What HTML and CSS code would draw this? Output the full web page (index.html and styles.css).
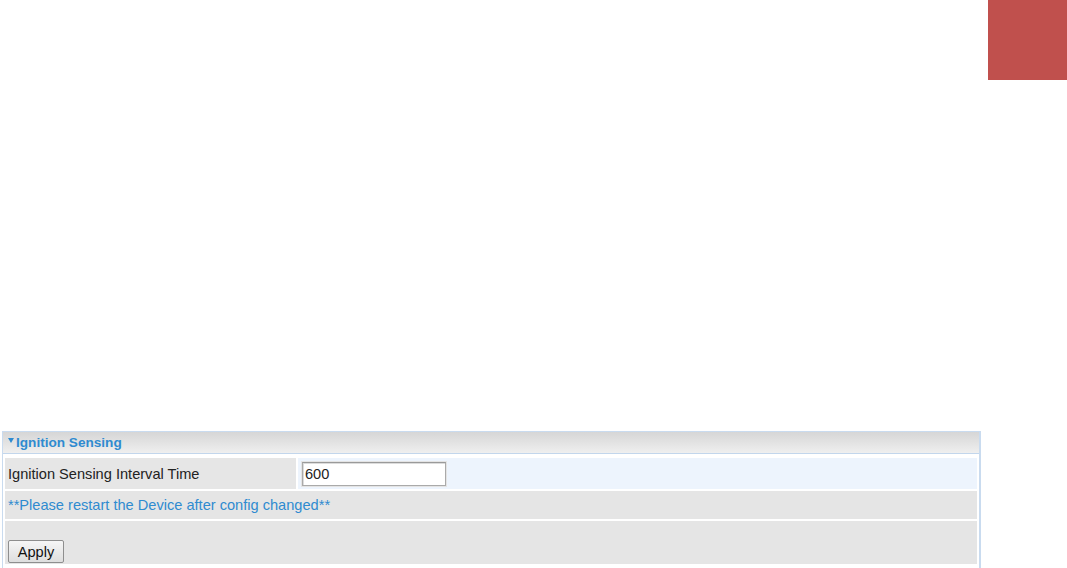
FILE: index.html
```html
<!DOCTYPE html>
<html>
<head>
<meta charset="utf-8">
<link rel="stylesheet" href="styles.css">
</head>
<body>
<div class="topbar"><div class="badge"></div></div>
<div class="panel">
  <div class="panel-head"><span class="caret"></span>Ignition Sensing</div>
  <table class="form">
    <tr class="row-input">
      <td class="label">Ignition Sensing Interval Time</td>
      <td class="value"><input class="field" type="text" value="600"></td>
    </tr>
    <tr class="row-note">
      <td class="note" colspan="2">**Please restart the Device after config changed**</td>
    </tr>
    <tr class="row-actions">
      <td class="actions" colspan="2"><button class="btn">Apply</button></td>
    </tr>
  </table>
</div>
</body>
</html>
```

FILE: styles.css
```css
html, body {
  margin: 0;
  padding: 0;
  background: #ffffff;
  font-family: "Liberation Sans", Arial, sans-serif;
  overflow: hidden;
}
.topbar {
  display: flex;
  justify-content: flex-end;
  height: 431px;
}
.badge {
  width: 79px;
  height: 80px;
  background: #c0504d;
}
.panel {
  margin-left: 2px;
  width: 976px;
  border: 1px solid #c9dbef;
  border-right: 2px solid #c9dbef;
  border-bottom: none;
  height: 160px;
}
.panel-head {
  height: 21px;
  line-height: 21px;
  background: linear-gradient(#d6d6d6, #efefef);
  border-bottom: 1px solid #c2d6ec;
  color: #2f8bd0;
  font-weight: bold;
  font-size: 13.6px;
  padding-left: 5px;
  display: flex;
  align-items: center;
}
.caret {
  width: 0;
  height: 0;
  border-left: 3px solid transparent;
  border-right: 3px solid transparent;
  border-top: 5px solid #2f8bd0;
  margin-right: 2px;
  margin-top: -5px;
}
.form {
  width: 976px;
  border-spacing: 2px;
  margin-top: 2px;
  font-size: 14.6px;
}
.form td {
  padding: 0 0 0 3px;
}
.row-input td {
  height: 31px;
}
.label {
  width: 288px;
  background: #e6e6e6;
  color: #222;
  font-size: 14.6px;
}
.value {
  background: #edf4fd;
  padding-left: 2px !important;
}
.field {
  box-sizing: border-box;
  width: 144px;
  height: 24px;
  border: 1px solid #aaaaaa;
  border-top-color: #9a9a9a;
  box-shadow: inset 1px 1px 0 #dcdcdc, 0 0 0 1px #e4e4e4;
  padding: 0 2px;
  font-family: "Liberation Sans", Arial, sans-serif;
  font-size: 14.6px;
  color: #222;
  margin-left: 2px;
}
.row-note td {
  height: 28px;
}
.note {
  background: #e5e5e5;
  color: #2f8bd0;
  font-size: 14.6px;
}
.row-actions td {
  height: 42px;
  vertical-align: bottom;
}
.actions {
  background: #e5e5e5;
  padding-bottom: 1px !important;
}
.btn {
  box-sizing: border-box;
  width: 56px;
  height: 23px;
  font-family: "Liberation Sans", Arial, sans-serif;
  font-size: 14.6px;
  color: #111;
  background: linear-gradient(#f6f6f6, #dedede);
  border: 1px solid #8e8e8e;
  border-radius: 2px;
  padding: 0;
  display: block;
}
```
